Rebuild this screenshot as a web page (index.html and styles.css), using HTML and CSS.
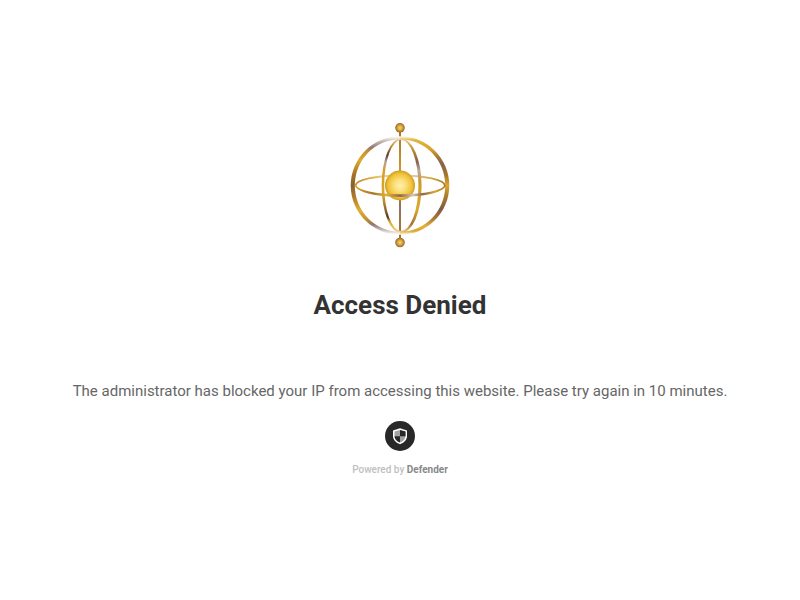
FILE: index.html
```html
<!DOCTYPE html>
<html lang="en">
  <head>
    <meta charset="utf-8" />
    <meta name="viewport" content="width=device-width, initial-scale=1" />
    <title>Access Denied</title>
    <link rel="stylesheet" href="styles.css">
  </head>
  <body>
    <main class="container">
      <svg class="logo" viewBox="0 0 120 140" aria-hidden="true">
        <defs>
          <radialGradient id="sphere">
            <stop offset="0" stop-color="#fff0b4" />
            <stop offset="0.4" stop-color="#fbdf78" />
            <stop offset="0.8" stop-color="#efc136" />
            <stop offset="1" stop-color="#cf9b20" />
          </radialGradient>
          <radialGradient id="ball">
            <stop offset="0" stop-color="#f6d878" />
            <stop offset="0.5" stop-color="#d9a838" />
            <stop offset="1" stop-color="#8f6530" />
          </radialGradient>
          <linearGradient id="ringLeft" gradientUnits="userSpaceOnUse" x1="0" y1="22" x2="0" y2="119">
            <stop offset="0" stop-color="#fdf8f2" />
            <stop offset="0.04" stop-color="#c9bcb8" />
            <stop offset="0.11" stop-color="#917a70" />
            <stop offset="0.15" stop-color="#c8922a" />
            <stop offset="0.24" stop-color="#dcac30" />
            <stop offset="0.38" stop-color="#a87424" />
            <stop offset="0.5" stop-color="#87602e" />
            <stop offset="0.62" stop-color="#b07b28" />
            <stop offset="0.76" stop-color="#e0b033" />
            <stop offset="0.85" stop-color="#c48f2c" />
            <stop offset="0.9" stop-color="#8d776d" />
            <stop offset="0.96" stop-color="#c9c0c0" />
            <stop offset="1" stop-color="#fdf8f2" />
          </linearGradient>
          <linearGradient id="ringRight" gradientUnits="userSpaceOnUse" x1="0" y1="22" x2="0" y2="119">
            <stop offset="0" stop-color="#fbf0d6" />
            <stop offset="0.03" stop-color="#e0b640" />
            <stop offset="0.12" stop-color="#d9a62c" />
            <stop offset="0.2" stop-color="#a77a38" />
            <stop offset="0.28" stop-color="#87604a" />
            <stop offset="0.4" stop-color="#a87728" />
            <stop offset="0.5" stop-color="#dba92c" />
            <stop offset="0.6" stop-color="#b17e2a" />
            <stop offset="0.74" stop-color="#805846" />
            <stop offset="0.84" stop-color="#a87a38" />
            <stop offset="0.92" stop-color="#e3b335" />
            <stop offset="0.97" stop-color="#d9a930" />
            <stop offset="1" stop-color="#fbf0d6" />
          </linearGradient>
          <linearGradient id="ovalLeft" x1="0" y1="0" x2="0" y2="1">
            <stop offset="0" stop-color="#f1dfb0" />
            <stop offset="0.07" stop-color="#c7942c" />
            <stop offset="0.18" stop-color="#5c4034" />
            <stop offset="0.25" stop-color="#b9a294" />
            <stop offset="0.34" stop-color="#d6a02a" />
            <stop offset="0.6" stop-color="#d9a62b" />
            <stop offset="0.76" stop-color="#8d642f" />
            <stop offset="0.83" stop-color="#4f3930" />
            <stop offset="0.88" stop-color="#d9a62b" />
            <stop offset="1" stop-color="#f5dc8c" />
          </linearGradient>
          <linearGradient id="ovalRight" x1="0" y1="0" x2="0" y2="1">
            <stop offset="0" stop-color="#f1dfb0" />
            <stop offset="0.1" stop-color="#c7942c" />
            <stop offset="0.25" stop-color="#87604a" />
            <stop offset="0.34" stop-color="#b5aaa4" />
            <stop offset="0.46" stop-color="#cf9a28" />
            <stop offset="0.75" stop-color="#dca92c" />
            <stop offset="0.9" stop-color="#a27335" />
            <stop offset="1" stop-color="#f0d489" />
          </linearGradient>
          <linearGradient id="orbitFront" x1="0" y1="0" x2="1" y2="0">
            <stop offset="0" stop-color="#d9a52b" />
            <stop offset="0.2" stop-color="#a8762c" />
            <stop offset="0.35" stop-color="#e2b032" />
            <stop offset="0.5" stop-color="#916a4c" />
            <stop offset="0.64" stop-color="#d6c4b4" />
            <stop offset="0.74" stop-color="#8c684e" />
            <stop offset="0.88" stop-color="#d9a52b" />
            <stop offset="1" stop-color="#a8762c" />
          </linearGradient>
          <linearGradient id="orbitBack" x1="0" y1="0" x2="1" y2="0">
            <stop offset="0" stop-color="#c08b2c" />
            <stop offset="0.15" stop-color="#dcac3a" />
            <stop offset="0.32" stop-color="#ecd08a" />
            <stop offset="0.65" stop-color="#dcc6a8" />
            <stop offset="0.85" stop-color="#d9a93a" />
            <stop offset="1" stop-color="#a8762c" />
          </linearGradient>
          <linearGradient id="rod" gradientUnits="userSpaceOnUse" x1="0" y1="16" x2="0" y2="124">
            <stop offset="0" stop-color="#a8762c" />
            <stop offset="0.35" stop-color="#c9982e" />
            <stop offset="0.68" stop-color="#94705e" />
            <stop offset="1" stop-color="#a8762c" />
          </linearGradient>
        </defs>

        <!-- back half of the orbit, then the axis -->
        <path fill="none" stroke="url(#orbitBack)" stroke-width="1.8" d="M15.6 70.5A44.6 10 0 0 1 104.8 70.5" />
        <path fill="url(#rod)" d="M59 16h2v108h-2z" />

        <!-- upright oval -->
        <path fill="url(#ovalLeft)" d="M61 23.300A19.400 47.400 0 0 0 61 118.100V115.900A16.800 45.400 0 0 1 61 25.100z" />
        <path fill="url(#ovalRight)" d="M61 23.300A20.600 47.400 0 0 1 61 118.100V115.900A17.400 45.400 0 0 0 61 25.100z" />

        <!-- outer ring -->
        <path fill="url(#ringLeft)" d="M60 21.200A49.300 49.300 0 0 0 60 119.800V116.800A45.200 46.300 0 0 1 60 24.200z" />
        <path fill="url(#ringRight)" d="M60 21.200A49.300 49.300 0 0 1 60 119.800V116.800A45.200 46.300 0 0 0 60 24.200z" />

        <circle cx="60" cy="70.5" r="15" fill="url(#sphere)" />
        <path fill="url(#orbitFront)" d="M14.600 70A45.700 12 0 0 0 106 70H104.200A43.900 9.200 0 0 1 16.400 70z" />

        <circle cx="60" cy="12.800" r="4.800" fill="url(#ball)" />
        <circle cx="60" cy="127.500" r="4.800" fill="url(#ball)" />
      </svg>
      <h1 class="title">Access Denied</h1>
      <p class="message">The administrator has blocked your IP from accessing this website. Please try again in 10 minutes.</p>
      <footer class="powered">
        <svg class="shield" viewBox="0 0 30 30" aria-hidden="true">
          <circle cx="15" cy="15" r="15" fill="#282828" />
          <path fill="#fff" d="M15 7.300L22 9.400V15C22 19 19 21.800 15 23.200C11 21.800 8 19 8 15V9.400z" />
          <path fill="#a3a3a3" d="M15 8.900L20.500 10.600V15C20.500 18 18.200 20.300 15 21.600C11.800 20.300 9.500 18 9.500 15V10.600z" />
          <path fill="#282828" d="M15 8.900L20.500 10.600V15.200H15zM15 15.200H9.500C9.600 18 11.800 20.300 15 21.600z" />
        </svg>
        <p class="credit">Powered by <strong>Defender</strong></p>
      </footer>
    </main>
  </body>
</html>
```
FILE: styles.css
```css
body {
  margin: 0;
  min-height: 100vh;
  display: flex;
  justify-content: center;
  align-items: center;
  background-color: #fff;
  font-family: Roboto, "Liberation Sans", sans-serif;
}
.container {
  display: flex;
  flex-direction: column;
  align-items: center;
  width: 100%;
  padding: 0 20px 6px;
  text-align: center;
}
.logo {
  width: 120px;
  height: 140px;
}
.title {
  margin: 30px 0;
  color: #333;
  font-size: 26px;
  line-height: 40px;
  font-weight: 700;
}
.message {
  margin: 21px 0 15px;
  color: #666;
  font-size: 15px;
  line-height: 30px;
}
.powered {
  display: flex;
  flex-direction: column;
  align-items: center;
}
.shield {
  width: 30px;
  height: 30px;
}
.credit {
  margin: 9px 0 0;
  color: #c0c0c0;
  font-size: 10px;
  line-height: 20px;
  font-weight: 500;
}
.credit strong {
  color: #888;
  font-weight: 700;
}
```
